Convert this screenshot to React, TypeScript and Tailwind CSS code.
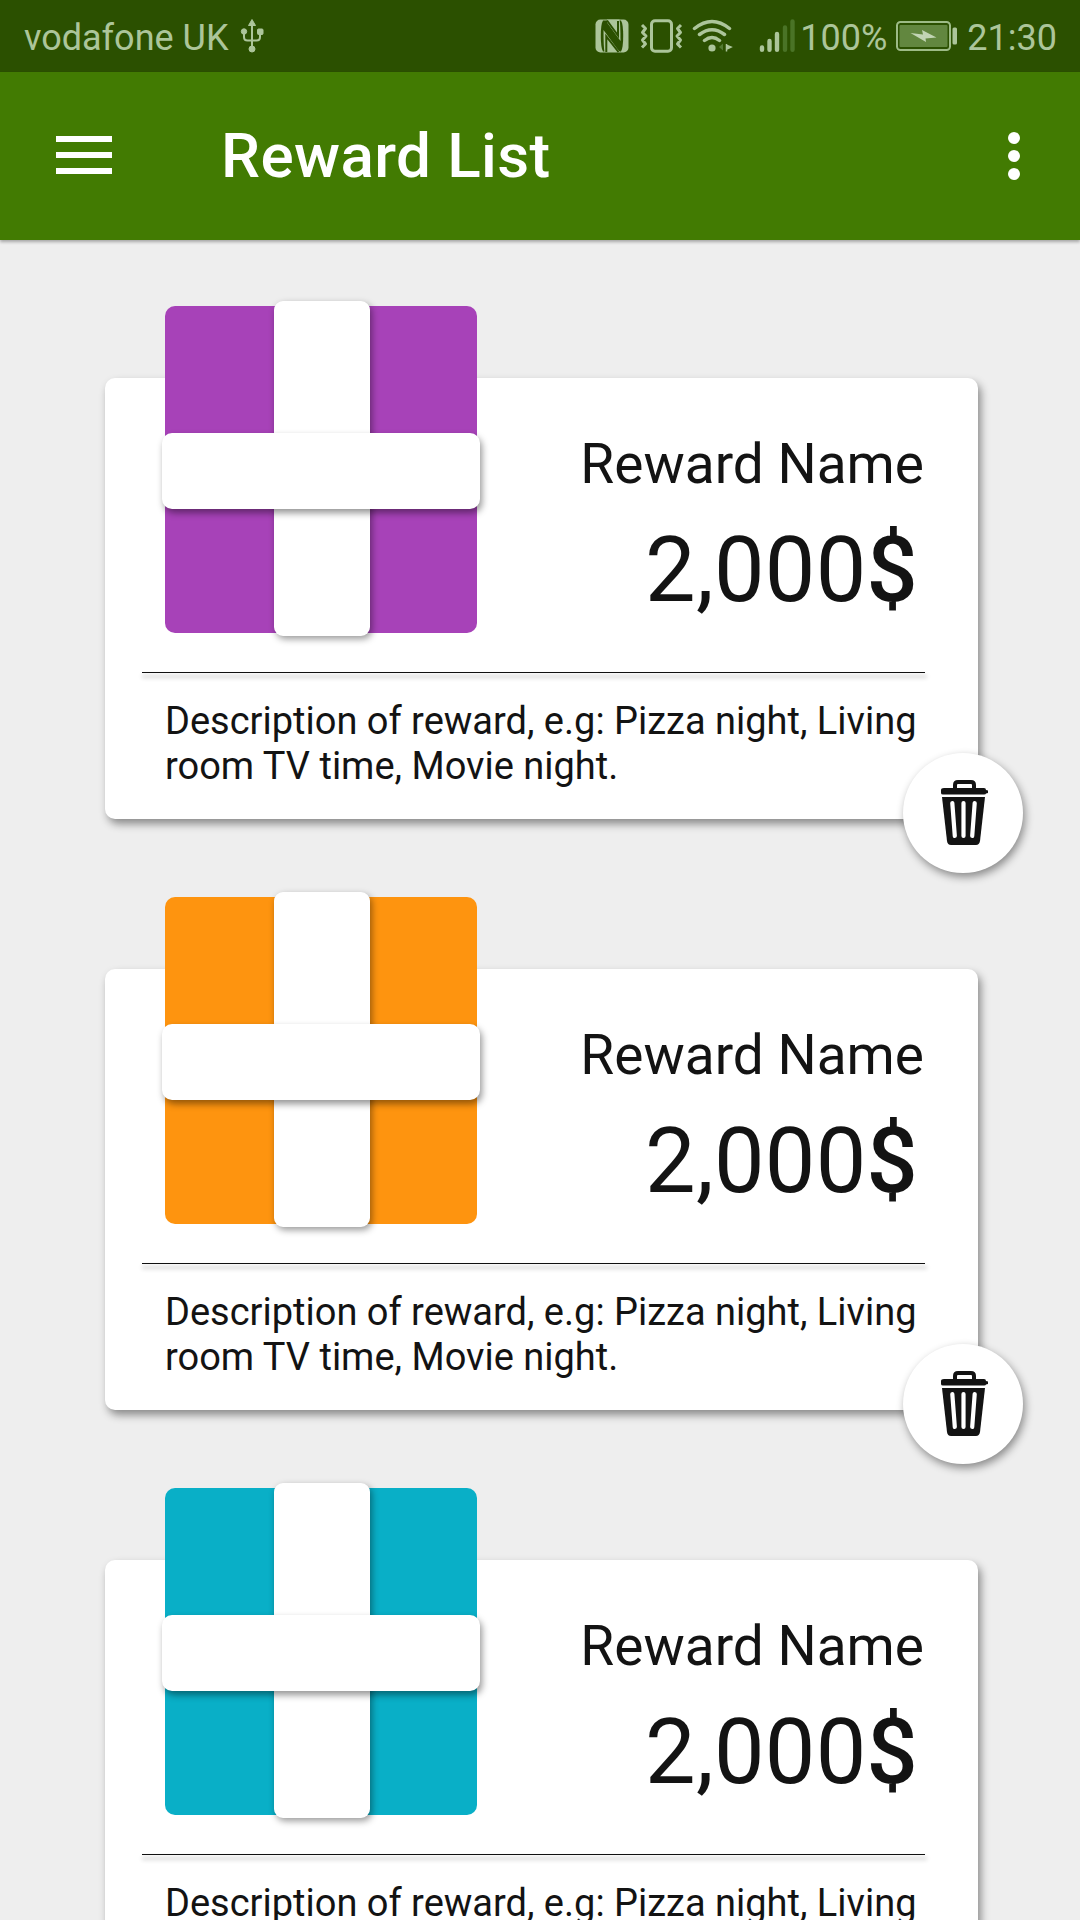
import React from "react";

const rewards = [
  { id: 1, color: "bg-[#a742b8]" },
  { id: 2, color: "bg-[#fe940f]" },
  { id: 3, color: "bg-[#09afc7]" },
];

function UsbIcon() {
  return (
    <svg className="ml-[12px] h-[36px] w-[24px]" viewBox="0 0 24 36" fill="#acc59a" stroke="#acc59a">
      <path d="M12 1.500l3.500 6h-7z" strokeWidth="1" />
      <path d="M12 7v24M4 14v5q0 3.500 3.500 3.500h9q3.500 0 3.500-3.500v-5" fill="none" strokeWidth="2" />
      <circle cx="4" cy="13.500" r="2.700" strokeWidth="1" />
      <rect x="17.500" y="11" width="5.500" height="5.500" rx="1" strokeWidth="1" />
      <circle cx="12" cy="31" r="3" strokeWidth="1" />
    </svg>
  );
}

function NfcIcon() {
  return (
    <svg className="h-[34px] w-[34px]" viewBox="0 0 34 34">
      <rect x="0.500" y="0.500" width="33" height="33" rx="5" fill="#acc59a" />
      <path d="M8 1.500h18Q28.200 5 28.200 17T26 32.500H8Q5.800 29 5.800 17T8 1.500z" fill="#2b5000" />
      <path d="M12 .5h12.500q1 5 1 21.500L12 3.500z" fill="#acc59a" />
      <path d="M14.500 3.500L22 11.500V3.500q0-2-2-2.500h-5.500z" fill="#acc59a" />
      <path d="M12 1.500L23 16.500V2" fill="none" stroke="#2b5000" strokeWidth="2" />
      <path d="M9.500 33q-1-5-1-22L22 29.500 25 33z" fill="#acc59a" />
      <path d="M11.300 33V17.500L23.500 33" fill="none" stroke="#2b5000" strokeWidth="2" />
    </svg>
  );
}

function VibrateIcon() {
  return (
    <svg className="ml-[11px] h-[34px] w-[44px]" viewBox="0 0 44 34" fill="none" stroke="#acc59a" strokeLinejoin="round">
      <rect x="11.500" y="1.800" width="20" height="30.400" rx="3.500" strokeWidth="3" />
      <path d="M2 6l3.500 3.500-3 4 3.500 3.500-3.500 4 3 4L2 28.500M41 6l-3.500 3.500 3 4-3.500 3.500 3.500 4-3 4 3.500 3.500" strokeWidth="3" />
    </svg>
  );
}

function WifiIcon() {
  return (
    <svg className="ml-[8px] h-[34px] w-[42px]" viewBox="0 0 42 34">
      <path d="M2.500 9.500Q20 -4.500 37.500 9.500M7.500 15.500Q20 6 32.500 15.500M12.500 21.500Q20 15.500 27.500 21.500" fill="none" stroke="#acc59a" strokeWidth="3.500" strokeLinecap="round" />
      <circle cx="20" cy="29" r="3.600" fill="#acc59a" />
      <path d="M31 24.500v7l-4-3.500z" fill="#527a31" />
      <path d="M34.500 25v7.500M35 26.500l4 1.500-4 2z" fill="#acc59a" stroke="#acc59a" strokeWidth="1.500" />
    </svg>
  );
}

function SignalIcon() {
  return (
    <svg className="ml-[25px] h-[34px] w-[36px]" viewBox="0 0 36 34" strokeWidth="4.400" strokeLinecap="round">
      <path d="M3 28.500v2.200M10.500 22v8.700M18 15v15.700" stroke="#acc59a" />
      <path d="M26 8.500v22.200M33.500 2.500v28.200" stroke="#4a7326" />
    </svg>
  );
}

function BatteryIcon() {
  return (
    <svg className="ml-[9px] h-[30px] w-[62px]" viewBox="0 0 62 30">
      <rect x="1" y="1" width="53" height="28" rx="3.500" fill="none" stroke="#9dbb86" strokeWidth="2" />
      <rect x="3.500" y="4" width="48" height="22" rx="1" fill="#62873f" />
      <path d="M14.500 12L27 13.500 26 9l14.500 7.500-11 1L30 21z" fill="#c2d5b4" />
      <rect x="56.500" y="6.500" width="4.500" height="17" rx="1.500" fill="#acc59a" />
    </svg>
  );
}

function TrashIcon() {
  return (
    <svg className="ml-[2px] h-[66px] w-[47px]" viewBox="0 0 47 66">
      <path d="M14 10V5q0-3 3-3h13q3 0 3 3v5" fill="none" stroke="#131313" strokeWidth="4" />
      <path d="M3 8h40q2 0 2 2l2 .5v2.500l-2 .5q0 1-2 1H2q-2 0-2-1.500V10q0-2 3-2z" fill="#131313" />
      <path d="M1 17h43l-5 44q-.7 4-4 4H10q-3.500 0-4-4z" fill="#131313" />
      <path d="M11.300 23l2.500 33M22.500 23v33M33.700 23l-2.500 33" fill="none" stroke="#fff" strokeWidth="4.200" strokeLinecap="round" />
    </svg>
  );
}

function Gift({ color }: { color: string }) {
  return (
    <div className={`absolute top-[-72px] left-[60px] h-[327px] w-[312px] rounded-[10px] ${color}`}>
      <div className="absolute top-[-5px] left-[109px] h-[335px] w-[96px] rounded-[9px] bg-white shadow-[2px_3px_7px_rgba(0,0,0,0.4)]" />
      <div className="absolute top-[127px] left-[-3px] h-[76px] w-[318px] rounded-[10px] bg-white shadow-[2px_4px_7px_rgba(0,0,0,0.42)]" />
    </div>
  );
}

function RewardCard({ color }: { color: string }) {
  return (
    <article className="h-[591px] shrink-0 pt-[138px] pl-[105px]">
      <div className="relative h-[441px] w-[873px] rounded-[10px] bg-white shadow-[3px_5px_8px_rgba(0,0,0,0.42)]">
        <Gift color={color} />
        <div className="flex h-[294px] flex-col items-end pt-[54px]">
          <h2 className="mr-[54px] text-[55px] leading-[64px]">Reward Name</h2>
          <p className="mt-[22px] mr-[60px] text-[90px] leading-[106px] tracking-[0.3px]">
            2,000<span className="font-medium">$</span>
          </p>
        </div>
        <div className="ml-[37px] h-px w-[783px] bg-[#111] shadow-[1px_4px_4px_1px_rgba(0,0,0,0.16)]" />
        <p className="mt-[26px] ml-[60px] w-[765px] text-[38px] leading-[45px]">
          Description of reward, e.g: Pizza night, Living room TV time, Movie night.
        </p>
        <button className="absolute top-[375px] left-[798px] flex h-[120px] w-[120px] items-center justify-center rounded-full bg-white shadow-[2px_4px_8px_rgba(0,0,0,0.42)]">
          <TrashIcon />
        </button>
      </div>
    </article>
  );
}

export default function App() {
  return (
    <div className="flex h-[1920px] w-[1080px] flex-col overflow-hidden bg-[#eeeeee] font-['Roboto',sans-serif] text-[#131313]">
      <div className="flex h-[72px] shrink-0 items-center justify-between bg-[#2b5000] pr-[23px] pl-[24px] text-[36px] leading-[42px] text-[#acc59a]">
        <div className="flex items-center">
          <span className="pt-[3px]">vodafone UK</span>
          <UsbIcon />
        </div>
        <div className="flex items-center">
          <NfcIcon />
          <VibrateIcon />
          <WifiIcon />
          <SignalIcon />
          <span className="ml-[5px] pt-[3px]">100%</span>
          <BatteryIcon />
          <span className="ml-[9px] pt-[3px]">21:30</span>
        </div>
      </div>
      <header className="z-10 flex h-[168px] shrink-0 items-center bg-[#427b02] pl-[56px] shadow-[0_2px_3px_rgba(0,0,0,0.3)]">
        <div className="mb-[2px] flex w-[56px] flex-col gap-[10px]">
          <span className="h-[6px] bg-white" />
          <span className="h-[6px] bg-white" />
          <span className="h-[6px] bg-white" />
        </div>
        <h1 className="ml-[109px] text-[62px] leading-[70px] font-medium tracking-[0.4px] text-white">Reward List</h1>
        <div className="mr-[60px] ml-auto flex flex-col gap-[6px]">
          <span className="size-[12px] rounded-full bg-white" />
          <span className="size-[12px] rounded-full bg-white" />
          <span className="size-[12px] rounded-full bg-white" />
        </div>
      </header>
      <main className="flex flex-1 flex-col overflow-hidden">
        {rewards.map((r) => (
          <RewardCard key={r.id} color={r.color} />
        ))}
      </main>
    </div>
  );
}
